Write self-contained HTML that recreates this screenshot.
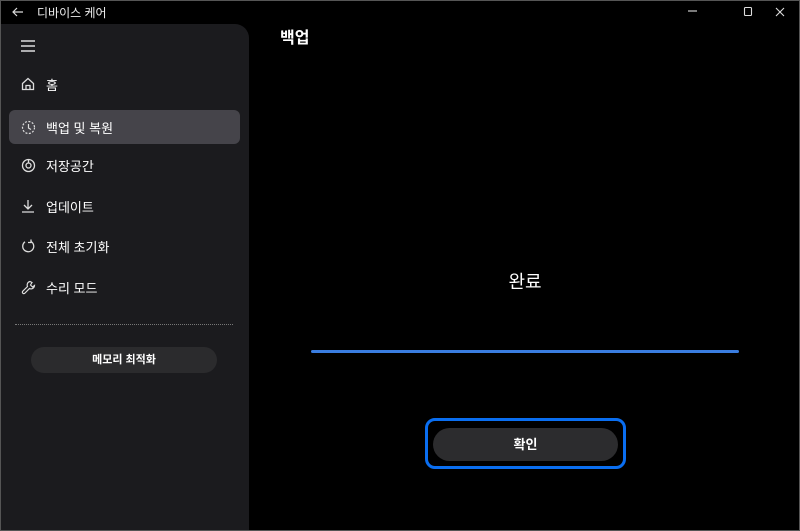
<!DOCTYPE html>
<html><head><meta charset="utf-8"><style>
*{margin:0;padding:0;box-sizing:border-box}
body{width:800px;height:531px;background:#000;font-family:"Liberation Sans","Noto Sans CJK KR",sans-serif;color:#fff;position:relative;overflow:hidden}
.frame{position:absolute;inset:0;border:1px solid #555;pointer-events:none;z-index:9}
.t{position:absolute}
.side{position:absolute;left:1px;top:24px;width:248px;height:506px;background:#1b1b1e;border-top-right-radius:14px}
.item{position:absolute;left:8px;width:231px;height:34px;display:flex;align-items:center;font-size:13px}
.item svg{position:absolute;left:12px}
.item span{position:absolute;left:37px}
.sel{background:#45444a;border-radius:6px}
</style></head><body>
<div class="frame"></div>
<svg class="t" style="left:11px;top:5px" width="14" height="14" viewBox="0 0 14 14" fill="none" stroke="#ddd" stroke-width="1.2"><path d="M12 7H2M6 3L2 7l4 4"/></svg>
<div class="t" style="left:37px;top:4px;font-size:12px;color:#eee">디바이스 케어</div>
<svg class="t" style="left:684px;top:5px" width="110" height="14" fill="none" stroke="#ddd" stroke-width="1.1"><path d="M4 6h9"/><rect x="60.5" y="2.5" width="7" height="8" rx="1"/><path d="M92 3l8 8M100 3l-8 8"/></svg>
<div class="side">
<svg class="t" style="left:20px;top:16px" width="14" height="12" stroke="#ddd" stroke-width="1.4"><path d="M0 1h14M0 6h14M0 11h14"/></svg>
<div class="item" style="top:43px"><svg width="14" height="14" fill="none" stroke="#ddd" stroke-width="1.3"><path d="M1.5 6.5L7 1.5l5.5 5v6h-11z"/><path d="M5 12.5v-4h4v4"/></svg><span>홈</span></div>
<div class="item sel" style="top:86px"><svg width="15" height="15" fill="none" stroke="#ddd" stroke-width="1.2"><circle cx="7.5" cy="7.5" r="6" stroke-dasharray="2 1.5"/><path d="M7.5 4v4l2.5 1.5"/></svg><span>백업 및 복원</span></div>
<div class="item" style="top:124px"><svg width="15" height="15" fill="none" stroke="#ddd" stroke-width="1.3"><circle cx="7.5" cy="7.5" r="6"/><circle cx="7.5" cy="7.5" r="2.5"/><path d="M7.5 1.5v3.5"/></svg><span>저장공간</span></div>
<div class="item" style="top:165px"><svg width="14" height="14" fill="none" stroke="#ddd" stroke-width="1.3"><path d="M7 1v9M3 6l4 4 4-4M1 13h12"/></svg><span>업데이트</span></div>
<div class="item" style="top:205px"><svg width="15" height="15" fill="none" stroke="#ddd" stroke-width="1.3"><path d="M10 2.5A5.5 5.5 0 1 1 4 2.8"/><path d="M10 0.5v3H7"/></svg><span>전체 초기화</span></div>
<div class="item" style="top:246px"><svg width="15" height="15" fill="none" stroke="#ddd" stroke-width="1.2"><path d="M9 1.5a3.5 3.5 0 0 0-2.5 5L1.5 11.5a1.5 1.5 0 0 0 2 2l5-5a3.5 3.5 0 0 0 5-3l-2 1.5-2-2L11 2.5z"/></svg><span>수리 모드</span></div>
<div class="t" style="left:14px;top:300px;width:218px;border-top:1px dotted #777"></div>
<div class="t" style="left:30px;top:323px;width:186px;height:26px;background:#2b2b2d;border-radius:13px;font-size:11px;font-weight:bold;text-align:center;line-height:26px">메모리 최적화</div>
</div>
<div class="t" style="left:280px;top:24px;font-size:16px;font-weight:bold">백업</div>
<div class="t" style="left:311px;top:268px;width:428px;text-align:center;font-size:18px">완료</div>
<div class="t" style="left:311px;top:350px;width:428px;height:3px;background:#3a7de0;border-radius:2px"></div>
<div class="t" style="left:425px;top:418px;width:201px;height:51px;border:3px solid #0a6ef0;border-radius:10px"></div>
<div class="t" style="left:433px;top:428px;width:185px;height:33px;background:#2c2c2e;border-radius:17px;font-size:13px;font-weight:bold;text-align:center;line-height:33px">확인</div>
</body></html>
